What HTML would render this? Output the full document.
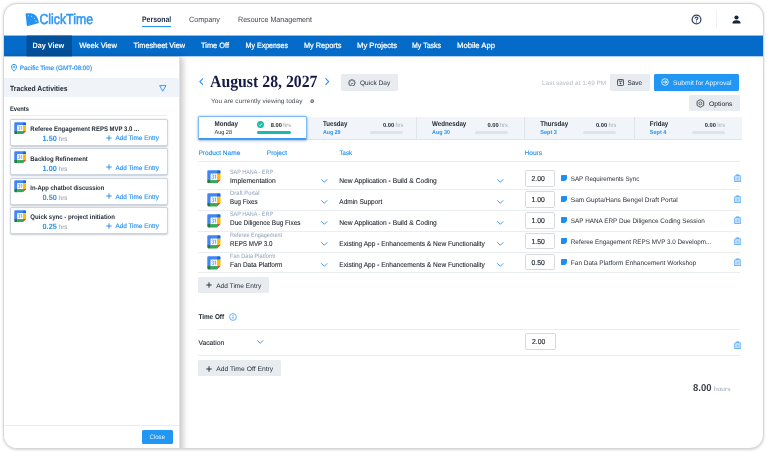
<!DOCTYPE html>
<html><head><meta charset="utf-8"><title>ClickTime</title>
<style>
html,body{margin:0;padding:0;background:#fff;}
body{width:768px;height:452px;position:relative;overflow:hidden;font-family:"Liberation Sans",sans-serif;}
#card{position:absolute;left:3px;top:3px;width:759px;height:444px;border:1px solid #d7d7d7;border-radius:14px;box-shadow:0 0.3px 2.5px rgba(0,0,0,.17);background:#fff;overflow:hidden;}
#in{position:absolute;left:-4px;top:-4px;width:768px;height:452px;}
#in div,#in svg{position:absolute;box-sizing:border-box;}
#tx{left:0;top:0;width:768px;height:452px;filter:blur(.3px);}
.t{position:absolute;left:0;top:0;white-space:nowrap;line-height:1;transform-origin:0 0;display:block;transform:scale(.25);text-rendering:geometricPrecision;}
.s{font-family:"Liberation Serif",serif;}
</style></head><body>
<div id="card"><div id="in">
<svg style="left:24.9px;top:13.1px;width:14.6px;height:13.6px" viewBox="0 0 14 13"><path d="M0.6 1.2 Q0.4 0.3 1.4 0.3 L5.5 0.3 Q11.5 0.6 13.3 8.6 Q13.5 9.6 12.5 9.8 L2.8 12.4 Q1.9 12.6 1.7 11.6 Z" fill="#2593f2"/><circle cx="3.2" cy="2.6" r="0.5" fill="#fff"/><circle cx="6.4" cy="3" r="0.5" fill="#fff"/><circle cx="9" cy="5" r="0.5" fill="#fff"/><circle cx="10.6" cy="7.8" r="0.55" fill="#fff"/></svg>
<div style="left:142px;top:26px;width:29.2px;height:1px;background:#2593f2"></div>
<svg style="left:691.1px;top:14px;width:11px;height:11px" viewBox="0 0 11 11"><circle cx="5.5" cy="5.5" r="4.4" fill="none" stroke="#30426a" stroke-width="1.25"/><path d="M4.1 4.5 Q4.1 3.1 5.5 3.1 Q6.9 3.1 6.9 4.3 Q6.9 5.1 5.5 5.8 L5.5 6.5" fill="none" stroke="#30426a" stroke-width="1.1"/><circle cx="5.5" cy="7.9" r="0.65" fill="#30426a"/></svg>
<div style="left:716.3px;top:10.5px;width:1px;height:17px;background:#eef1f6"></div>
<svg style="left:732px;top:15px;width:9px;height:9px" viewBox="0 0 9 9"><circle cx="4.5" cy="2.5" r="2.1" fill="#15233b"/><path d="M0.4 8.5 Q0.4 5.2 4.5 5.2 Q8.6 5.2 8.6 8.5 Z" fill="#15233b"/></svg>
<div style="left:0px;top:35px;width:768px;height:1px;background:rgba(4,107,201,.45)"></div>
<div style="left:0px;top:56px;width:768px;height:1px;background:rgba(4,107,201,.3)"></div>
<div style="left:0px;top:36px;width:768px;height:20px;background:#046bc9"></div>
<div style="left:27px;top:35px;width:45px;height:1px;background:rgba(3,80,154,.45)"></div>
<div style="left:27px;top:56px;width:45px;height:1px;background:rgba(3,80,154,.3)"></div>
<div style="left:26px;top:36px;width:1px;height:20px;background:rgba(3,80,154,.5)"></div>
<div style="left:27px;top:36px;width:45px;height:20px;background:#03509a"></div>
<div style="left:0px;top:57px;width:180px;height:400px;background:#fff;border-right:1px solid #dfe3e8;box-shadow:2.5px 0 6px rgba(0,0,0,.22)"></div>
<svg style="left:11.2px;top:64.2px;width:6px;height:7.6px" viewBox="0 0 6 7.6"><path d="M3 0.4 C1.5 0.4 0.5 1.5 0.5 2.9 C0.5 4.6 3 7.2 3 7.2 C3 7.2 5.5 4.6 5.5 2.9 C5.5 1.5 4.5 0.4 3 0.4 Z" fill="none" stroke="#2b93f0" stroke-width="1"/><circle cx="3" cy="2.9" r="0.95" fill="#2b93f0"/></svg>
<div style="left:4px;top:78.2px;width:175.4px;height:18.8px;background:#f0f4f9"></div>
<svg style="left:159px;top:84.6px;width:7.6px;height:7px" viewBox="0 0 7.6 7"><path d="M0.6 0.6 L7 0.6 L3.8 6.2 Z" fill="none" stroke="#2b93f0" stroke-width="0.9" stroke-linejoin="round"/></svg>
<div style="left:10px;top:114.8px;width:157px;height:1px;background:#eaeef3"></div>
<div style="left:10px;top:118.8px;width:157.6px;height:27px;background:#fff;border:1px solid #ccd5e0;border-radius:2px;box-shadow:0 0.8px 1.6px rgba(40,60,90,.26)"></div>
<svg style="left:14.1px;top:121.7px;width:12.4px;height:12.4px" viewBox="0 0 24 24"><path d="M2.5 0.5 H17.5 V6.5 H6.5 V17.5 H0.5 V2.5 Q0.5 0.5 2.5 0.5Z" fill="#4285f4"/><path d="M17.5 0.5 H21.5 Q23.5 0.5 23.5 2.5 V6.5 H17.5Z" fill="#1967d2"/><rect x="17.5" y="6.5" width="6" height="11" fill="#fbbc04"/><rect x="6.5" y="17.5" width="11" height="6" fill="#34a853"/><path d="M0.5 17.5 H6.5 V23.5 H2.5 Q0.5 23.5 0.5 21.5Z" fill="#188038"/><path d="M17.5 17.5 H23.5 L17.5 23.5Z" fill="#ea4335"/><rect x="6.5" y="6.5" width="11" height="11" fill="#fff"/><path d="M8.3 9.3 Q9 8.5 10.1 8.5 Q11.6 8.5 11.6 9.9 Q11.6 11.2 10 11.6 Q11.9 11.8 11.9 13.4 Q11.9 15.1 10.1 15.1 Q8.8 15.1 8.1 14.1 M13.3 9.7 L15 8.6 V15.2" fill="none" stroke="#4f8df5" stroke-width="1.35"/></svg>
<svg style="left:105.9px;top:134.7px;width:6px;height:6px" viewBox="0 0 6 6"><path d="M3 0.3 V5.7 M0.3 3 H5.7" stroke="#2b93f0" stroke-width="1" fill="none"/></svg>
<div style="left:10px;top:148.2px;width:157.6px;height:27px;background:#fff;border:1px solid #ccd5e0;border-radius:2px;box-shadow:0 0.8px 1.6px rgba(40,60,90,.26)"></div>
<svg style="left:14.1px;top:151.1px;width:12.4px;height:12.4px" viewBox="0 0 24 24"><path d="M2.5 0.5 H17.5 V6.5 H6.5 V17.5 H0.5 V2.5 Q0.5 0.5 2.5 0.5Z" fill="#4285f4"/><path d="M17.5 0.5 H21.5 Q23.5 0.5 23.5 2.5 V6.5 H17.5Z" fill="#1967d2"/><rect x="17.5" y="6.5" width="6" height="11" fill="#fbbc04"/><rect x="6.5" y="17.5" width="11" height="6" fill="#34a853"/><path d="M0.5 17.5 H6.5 V23.5 H2.5 Q0.5 23.5 0.5 21.5Z" fill="#188038"/><path d="M17.5 17.5 H23.5 L17.5 23.5Z" fill="#ea4335"/><rect x="6.5" y="6.5" width="11" height="11" fill="#fff"/><path d="M8.3 9.3 Q9 8.5 10.1 8.5 Q11.6 8.5 11.6 9.9 Q11.6 11.2 10 11.6 Q11.9 11.8 11.9 13.4 Q11.9 15.1 10.1 15.1 Q8.8 15.1 8.1 14.1 M13.3 9.7 L15 8.6 V15.2" fill="none" stroke="#4f8df5" stroke-width="1.35"/></svg>
<svg style="left:105.9px;top:164.1px;width:6px;height:6px" viewBox="0 0 6 6"><path d="M3 0.3 V5.7 M0.3 3 H5.7" stroke="#2b93f0" stroke-width="1" fill="none"/></svg>
<div style="left:10px;top:177.5px;width:157.6px;height:27px;background:#fff;border:1px solid #ccd5e0;border-radius:2px;box-shadow:0 0.8px 1.6px rgba(40,60,90,.26)"></div>
<svg style="left:14.1px;top:180.4px;width:12.4px;height:12.4px" viewBox="0 0 24 24"><path d="M2.5 0.5 H17.5 V6.5 H6.5 V17.5 H0.5 V2.5 Q0.5 0.5 2.5 0.5Z" fill="#4285f4"/><path d="M17.5 0.5 H21.5 Q23.5 0.5 23.5 2.5 V6.5 H17.5Z" fill="#1967d2"/><rect x="17.5" y="6.5" width="6" height="11" fill="#fbbc04"/><rect x="6.5" y="17.5" width="11" height="6" fill="#34a853"/><path d="M0.5 17.5 H6.5 V23.5 H2.5 Q0.5 23.5 0.5 21.5Z" fill="#188038"/><path d="M17.5 17.5 H23.5 L17.5 23.5Z" fill="#ea4335"/><rect x="6.5" y="6.5" width="11" height="11" fill="#fff"/><path d="M8.3 9.3 Q9 8.5 10.1 8.5 Q11.6 8.5 11.6 9.9 Q11.6 11.2 10 11.6 Q11.9 11.8 11.9 13.4 Q11.9 15.1 10.1 15.1 Q8.8 15.1 8.1 14.1 M13.3 9.7 L15 8.6 V15.2" fill="none" stroke="#4f8df5" stroke-width="1.35"/></svg>
<svg style="left:105.9px;top:193.4px;width:6px;height:6px" viewBox="0 0 6 6"><path d="M3 0.3 V5.7 M0.3 3 H5.7" stroke="#2b93f0" stroke-width="1" fill="none"/></svg>
<div style="left:10px;top:206.8px;width:157.6px;height:27px;background:#fff;border:1px solid #ccd5e0;border-radius:2px;box-shadow:0 0.8px 1.6px rgba(40,60,90,.26)"></div>
<svg style="left:14.1px;top:209.70000000000002px;width:12.4px;height:12.4px" viewBox="0 0 24 24"><path d="M2.5 0.5 H17.5 V6.5 H6.5 V17.5 H0.5 V2.5 Q0.5 0.5 2.5 0.5Z" fill="#4285f4"/><path d="M17.5 0.5 H21.5 Q23.5 0.5 23.5 2.5 V6.5 H17.5Z" fill="#1967d2"/><rect x="17.5" y="6.5" width="6" height="11" fill="#fbbc04"/><rect x="6.5" y="17.5" width="11" height="6" fill="#34a853"/><path d="M0.5 17.5 H6.5 V23.5 H2.5 Q0.5 23.5 0.5 21.5Z" fill="#188038"/><path d="M17.5 17.5 H23.5 L17.5 23.5Z" fill="#ea4335"/><rect x="6.5" y="6.5" width="11" height="11" fill="#fff"/><path d="M8.3 9.3 Q9 8.5 10.1 8.5 Q11.6 8.5 11.6 9.9 Q11.6 11.2 10 11.6 Q11.9 11.8 11.9 13.4 Q11.9 15.1 10.1 15.1 Q8.8 15.1 8.1 14.1 M13.3 9.7 L15 8.6 V15.2" fill="none" stroke="#4f8df5" stroke-width="1.35"/></svg>
<svg style="left:105.9px;top:222.70000000000002px;width:6px;height:6px" viewBox="0 0 6 6"><path d="M3 0.3 V5.7 M0.3 3 H5.7" stroke="#2b93f0" stroke-width="1" fill="none"/></svg>
<div style="left:4px;top:425.2px;width:175.4px;height:1px;background:#eaeef3"></div>
<div style="left:142px;top:429.8px;width:30.8px;height:14.4px;background:#2196f3;border-radius:1.5px"></div>
<svg style="left:198.6px;top:78.2px;width:4.6px;height:7.4px" viewBox="0 0 4.6 7.4"><path d="M3.8 0.7 L0.9 3.7 L3.8 6.7" fill="none" stroke="#2b93f0" stroke-width="1.1" stroke-linecap="round" stroke-linejoin="round"/></svg>
<svg style="left:325px;top:78.2px;width:4.6px;height:7.4px" viewBox="0 0 4.6 7.4"><path d="M0.8 0.7 L3.7 3.7 L0.8 6.7" fill="none" stroke="#2b93f0" stroke-width="1.1" stroke-linecap="round" stroke-linejoin="round"/></svg>
<div style="left:340.8px;top:74.2px;width:57.2px;height:16.4px;background:#e8ebef;border-radius:1.5px"></div>
<svg style="left:347.8px;top:78.6px;width:7.8px;height:7.8px" viewBox="0 0 8 8"><circle cx="4" cy="4" r="3.3" fill="none" stroke="#39404a" stroke-width="0.8"/><path d="M4 1.1 V2 M1.1 4 H2 M6 4 H6.9 M2 2 L2.6 2.6 M6 2 L5.4 2.6 M4.2 4 L3 6 M4.2 4 L5.3 5.2" stroke="#39404a" stroke-width="0.65" fill="none"/></svg>
<svg style="left:309.8px;top:99px;width:4.4px;height:4.4px" viewBox="0 0 4 4"><circle cx="2" cy="2" r="1.7" fill="#6c727b"/><circle cx="2" cy="2" r="0.6" fill="#fff"/></svg>
<div style="left:610px;top:74px;width:40px;height:16.5px;background:#e8ebef;border-radius:1.5px"></div>
<svg style="left:617px;top:79px;width:7px;height:7px" viewBox="0 0 7 7"><rect x="0.5" y="0.5" width="6" height="6" rx="0.8" fill="none" stroke="#2d333c" stroke-width="0.8"/><path d="M2 0.8 V2.4 H5 V0.8" fill="none" stroke="#2d333c" stroke-width="0.7"/><circle cx="3.5" cy="4.4" r="0.8" fill="#2d333c"/></svg>
<div style="left:654px;top:74px;width:85.4px;height:16.5px;background:#2196f3;border-radius:1.5px"></div>
<svg style="left:661px;top:78.4px;width:8px;height:8px" viewBox="0 0 8 8"><circle cx="4" cy="4" r="3.3" fill="none" stroke="#fff" stroke-width="0.8"/><path d="M2.1 4 H5.7 M4.2 2.5 L5.8 4 L4.2 5.5" fill="none" stroke="#fff" stroke-width="0.95"/></svg>
<div style="left:689.4px;top:95px;width:50.4px;height:16.4px;background:#e8ebef;border-radius:1.5px"></div>
<svg style="left:696px;top:99.2px;width:8.8px;height:8.8px" viewBox="0 0 8 8"><path d="M4 0.5 L7 2.2 V5.8 L4 7.5 L1 5.8 V2.2 Z" fill="none" stroke="#39404a" stroke-width="0.8" stroke-linejoin="round"/><circle cx="4" cy="4" r="1.3" fill="none" stroke="#39404a" stroke-width="0.7"/></svg>
<div style="left:198.4px;top:117px;width:543.4px;height:22.6px;background:#f1f5f9;border-bottom:1px solid #dde4ec"></div>
<div style="left:415.7px;top:117px;width:1px;height:22px;background:#dde4ec"></div>
<div style="left:524.4px;top:117px;width:1px;height:22px;background:#dde4ec"></div>
<div style="left:633.6px;top:117px;width:1px;height:22px;background:#dde4ec"></div>
<div style="left:198px;top:116px;width:109px;height:24px;background:#fff;border:1px solid #7ebcf5;border-bottom:2px solid #3d9cf1;border-radius:2px;box-shadow:0 0 2px rgba(43,147,240,.55),0 1px 3px rgba(30,60,110,.25)"></div>
<svg style="left:257.1px;top:121.2px;width:7px;height:7px" viewBox="0 0 8 8"><circle cx="4" cy="4" r="4" fill="#1bbcab"/><path d="M2.2 4.1 L3.5 5.4 L5.8 2.9" fill="none" stroke="#fff" stroke-width="0.9"/></svg>
<div style="left:257px;top:131.2px;width:34px;height:3px;background:#18bca8;border-radius:1.5px"></div>
<div style="left:369.5px;top:131.2px;width:33.69999999999999px;height:3px;background:#dde3ea;border-radius:1.5px"></div>
<div style="left:475px;top:131.2px;width:32.69999999999999px;height:3px;background:#dde3ea;border-radius:1.5px"></div>
<div style="left:583px;top:131.2px;width:33.10000000000002px;height:3px;background:#dde3ea;border-radius:1.5px"></div>
<div style="left:692px;top:131.2px;width:32.90000000000009px;height:3px;background:#dde3ea;border-radius:1.5px"></div>
<div style="left:198.4px;top:161.2px;width:541.4px;height:1px;background:#eaeef3"></div>
<svg style="left:207.3px;top:169.6px;width:13.8px;height:13.8px" viewBox="0 0 24 24"><path d="M2.5 0.5 H17.5 V6.5 H6.5 V17.5 H0.5 V2.5 Q0.5 0.5 2.5 0.5Z" fill="#4285f4"/><path d="M17.5 0.5 H21.5 Q23.5 0.5 23.5 2.5 V6.5 H17.5Z" fill="#1967d2"/><rect x="17.5" y="6.5" width="6" height="11" fill="#fbbc04"/><rect x="6.5" y="17.5" width="11" height="6" fill="#34a853"/><path d="M0.5 17.5 H6.5 V23.5 H2.5 Q0.5 23.5 0.5 21.5Z" fill="#188038"/><path d="M17.5 17.5 H23.5 L17.5 23.5Z" fill="#ea4335"/><rect x="6.5" y="6.5" width="11" height="11" fill="#fff"/><path d="M8.3 9.3 Q9 8.5 10.1 8.5 Q11.6 8.5 11.6 9.9 Q11.6 11.2 10 11.6 Q11.9 11.8 11.9 13.4 Q11.9 15.1 10.1 15.1 Q8.8 15.1 8.1 14.1 M13.3 9.7 L15 8.6 V15.2" fill="none" stroke="#4f8df5" stroke-width="1.35"/></svg>
<svg style="left:321.1px;top:178.8px;width:6.6px;height:4px" viewBox="0 0 6.6 4"><path d="M0.6 0.6 L3.3 3.3 L6 0.6" fill="none" stroke="#3798f1" stroke-width="0.95" stroke-linecap="round" stroke-linejoin="round"/></svg>
<svg style="left:497.2px;top:178.8px;width:6.6px;height:4px" viewBox="0 0 6.6 4"><path d="M0.6 0.6 L3.3 3.3 L6 0.6" fill="none" stroke="#3798f1" stroke-width="0.95" stroke-linecap="round" stroke-linejoin="round"/></svg>
<div style="left:524.6px;top:170.20000000000002px;width:30.2px;height:16.4px;background:#fff;border:1px solid #d6dade;border-radius:1.8px"></div>
<svg style="left:561px;top:174.9px;width:6.4px;height:6.2px" viewBox="0 0 6.4 6.2"><path d="M1 0 H5.4 Q6.4 0 6.4 1 V3.6 L3.8 6.2 H1 Q0 6.2 0 5.2 V1 Q0 0 1 0Z" fill="#1e8ef5"/></svg>
<svg style="left:733.6px;top:173.8px;width:7.4px;height:8.6px" viewBox="0 0 7.4 8.6"><rect x="2.3" y="0.4" width="2.8" height="1.8" rx="0.7" fill="#9fcdf9" stroke="#55a9f4" stroke-width="0.5"/><rect x="0.55" y="1.6" width="6.3" height="6.5" rx="1.1" fill="#c3e0fc" stroke="#4aa3f5" stroke-width="0.7"/><path d="M1 7.9 H6.4" stroke="#2b93f0" stroke-width="0.7"/><path d="M3.7 3.6 V6.3 M2.5 4.9 H4.9" stroke="#7bbcf7" stroke-width="0.7"/></svg>
<svg style="left:207.3px;top:193.2px;width:13.8px;height:13.8px" viewBox="0 0 24 24"><path d="M2.5 0.5 H17.5 V6.5 H6.5 V17.5 H0.5 V2.5 Q0.5 0.5 2.5 0.5Z" fill="#4285f4"/><path d="M17.5 0.5 H21.5 Q23.5 0.5 23.5 2.5 V6.5 H17.5Z" fill="#1967d2"/><rect x="17.5" y="6.5" width="6" height="11" fill="#fbbc04"/><rect x="6.5" y="17.5" width="11" height="6" fill="#34a853"/><path d="M0.5 17.5 H6.5 V23.5 H2.5 Q0.5 23.5 0.5 21.5Z" fill="#188038"/><path d="M17.5 17.5 H23.5 L17.5 23.5Z" fill="#ea4335"/><rect x="6.5" y="6.5" width="11" height="11" fill="#fff"/><path d="M8.3 9.3 Q9 8.5 10.1 8.5 Q11.6 8.5 11.6 9.9 Q11.6 11.2 10 11.6 Q11.9 11.8 11.9 13.4 Q11.9 15.1 10.1 15.1 Q8.8 15.1 8.1 14.1 M13.3 9.7 L15 8.6 V15.2" fill="none" stroke="#4f8df5" stroke-width="1.35"/></svg>
<svg style="left:321.1px;top:199.8px;width:6.6px;height:4px" viewBox="0 0 6.6 4"><path d="M0.6 0.6 L3.3 3.3 L6 0.6" fill="none" stroke="#3798f1" stroke-width="0.95" stroke-linecap="round" stroke-linejoin="round"/></svg>
<svg style="left:497.2px;top:199.8px;width:6.6px;height:4px" viewBox="0 0 6.6 4"><path d="M0.6 0.6 L3.3 3.3 L6 0.6" fill="none" stroke="#3798f1" stroke-width="0.95" stroke-linecap="round" stroke-linejoin="round"/></svg>
<div style="left:524.6px;top:191.3px;width:30.2px;height:16.4px;background:#fff;border:1px solid #d6dade;border-radius:1.8px"></div>
<svg style="left:561px;top:196.0px;width:6.4px;height:6.2px" viewBox="0 0 6.4 6.2"><path d="M1 0 H5.4 Q6.4 0 6.4 1 V3.6 L3.8 6.2 H1 Q0 6.2 0 5.2 V1 Q0 0 1 0Z" fill="#1e8ef5"/></svg>
<svg style="left:733.6px;top:194.9px;width:7.4px;height:8.6px" viewBox="0 0 7.4 8.6"><rect x="2.3" y="0.4" width="2.8" height="1.8" rx="0.7" fill="#9fcdf9" stroke="#55a9f4" stroke-width="0.5"/><rect x="0.55" y="1.6" width="6.3" height="6.5" rx="1.1" fill="#c3e0fc" stroke="#4aa3f5" stroke-width="0.7"/><path d="M1 7.9 H6.4" stroke="#2b93f0" stroke-width="0.7"/><path d="M3.7 3.6 V6.3 M2.5 4.9 H4.9" stroke="#7bbcf7" stroke-width="0.7"/></svg>
<svg style="left:207.3px;top:214.1px;width:13.8px;height:13.8px" viewBox="0 0 24 24"><path d="M2.5 0.5 H17.5 V6.5 H6.5 V17.5 H0.5 V2.5 Q0.5 0.5 2.5 0.5Z" fill="#4285f4"/><path d="M17.5 0.5 H21.5 Q23.5 0.5 23.5 2.5 V6.5 H17.5Z" fill="#1967d2"/><rect x="17.5" y="6.5" width="6" height="11" fill="#fbbc04"/><rect x="6.5" y="17.5" width="11" height="6" fill="#34a853"/><path d="M0.5 17.5 H6.5 V23.5 H2.5 Q0.5 23.5 0.5 21.5Z" fill="#188038"/><path d="M17.5 17.5 H23.5 L17.5 23.5Z" fill="#ea4335"/><rect x="6.5" y="6.5" width="11" height="11" fill="#fff"/><path d="M8.3 9.3 Q9 8.5 10.1 8.5 Q11.6 8.5 11.6 9.9 Q11.6 11.2 10 11.6 Q11.9 11.8 11.9 13.4 Q11.9 15.1 10.1 15.1 Q8.8 15.1 8.1 14.1 M13.3 9.7 L15 8.6 V15.2" fill="none" stroke="#4f8df5" stroke-width="1.35"/></svg>
<svg style="left:321.1px;top:220.8px;width:6.6px;height:4px" viewBox="0 0 6.6 4"><path d="M0.6 0.6 L3.3 3.3 L6 0.6" fill="none" stroke="#3798f1" stroke-width="0.95" stroke-linecap="round" stroke-linejoin="round"/></svg>
<svg style="left:497.2px;top:220.8px;width:6.6px;height:4px" viewBox="0 0 6.6 4"><path d="M0.6 0.6 L3.3 3.3 L6 0.6" fill="none" stroke="#3798f1" stroke-width="0.95" stroke-linecap="round" stroke-linejoin="round"/></svg>
<div style="left:524.6px;top:212.20000000000002px;width:30.2px;height:16.4px;background:#fff;border:1px solid #d6dade;border-radius:1.8px"></div>
<svg style="left:561px;top:216.9px;width:6.4px;height:6.2px" viewBox="0 0 6.4 6.2"><path d="M1 0 H5.4 Q6.4 0 6.4 1 V3.6 L3.8 6.2 H1 Q0 6.2 0 5.2 V1 Q0 0 1 0Z" fill="#1e8ef5"/></svg>
<svg style="left:733.6px;top:215.8px;width:7.4px;height:8.6px" viewBox="0 0 7.4 8.6"><rect x="2.3" y="0.4" width="2.8" height="1.8" rx="0.7" fill="#9fcdf9" stroke="#55a9f4" stroke-width="0.5"/><rect x="0.55" y="1.6" width="6.3" height="6.5" rx="1.1" fill="#c3e0fc" stroke="#4aa3f5" stroke-width="0.7"/><path d="M1 7.9 H6.4" stroke="#2b93f0" stroke-width="0.7"/><path d="M3.7 3.6 V6.3 M2.5 4.9 H4.9" stroke="#7bbcf7" stroke-width="0.7"/></svg>
<svg style="left:207.3px;top:235.0px;width:13.8px;height:13.8px" viewBox="0 0 24 24"><path d="M2.5 0.5 H17.5 V6.5 H6.5 V17.5 H0.5 V2.5 Q0.5 0.5 2.5 0.5Z" fill="#4285f4"/><path d="M17.5 0.5 H21.5 Q23.5 0.5 23.5 2.5 V6.5 H17.5Z" fill="#1967d2"/><rect x="17.5" y="6.5" width="6" height="11" fill="#fbbc04"/><rect x="6.5" y="17.5" width="11" height="6" fill="#34a853"/><path d="M0.5 17.5 H6.5 V23.5 H2.5 Q0.5 23.5 0.5 21.5Z" fill="#188038"/><path d="M17.5 17.5 H23.5 L17.5 23.5Z" fill="#ea4335"/><rect x="6.5" y="6.5" width="11" height="11" fill="#fff"/><path d="M8.3 9.3 Q9 8.5 10.1 8.5 Q11.6 8.5 11.6 9.9 Q11.6 11.2 10 11.6 Q11.9 11.8 11.9 13.4 Q11.9 15.1 10.1 15.1 Q8.8 15.1 8.1 14.1 M13.3 9.7 L15 8.6 V15.2" fill="none" stroke="#4f8df5" stroke-width="1.35"/></svg>
<svg style="left:321.1px;top:241.8px;width:6.6px;height:4px" viewBox="0 0 6.6 4"><path d="M0.6 0.6 L3.3 3.3 L6 0.6" fill="none" stroke="#3798f1" stroke-width="0.95" stroke-linecap="round" stroke-linejoin="round"/></svg>
<svg style="left:497.2px;top:241.8px;width:6.6px;height:4px" viewBox="0 0 6.6 4"><path d="M0.6 0.6 L3.3 3.3 L6 0.6" fill="none" stroke="#3798f1" stroke-width="0.95" stroke-linecap="round" stroke-linejoin="round"/></svg>
<div style="left:524.6px;top:233.10000000000002px;width:30.2px;height:16.4px;background:#fff;border:1px solid #d6dade;border-radius:1.8px"></div>
<svg style="left:561px;top:237.8px;width:6.4px;height:6.2px" viewBox="0 0 6.4 6.2"><path d="M1 0 H5.4 Q6.4 0 6.4 1 V3.6 L3.8 6.2 H1 Q0 6.2 0 5.2 V1 Q0 0 1 0Z" fill="#1e8ef5"/></svg>
<svg style="left:733.6px;top:236.70000000000002px;width:7.4px;height:8.6px" viewBox="0 0 7.4 8.6"><rect x="2.3" y="0.4" width="2.8" height="1.8" rx="0.7" fill="#9fcdf9" stroke="#55a9f4" stroke-width="0.5"/><rect x="0.55" y="1.6" width="6.3" height="6.5" rx="1.1" fill="#c3e0fc" stroke="#4aa3f5" stroke-width="0.7"/><path d="M1 7.9 H6.4" stroke="#2b93f0" stroke-width="0.7"/><path d="M3.7 3.6 V6.3 M2.5 4.9 H4.9" stroke="#7bbcf7" stroke-width="0.7"/></svg>
<svg style="left:207.3px;top:255.9px;width:13.8px;height:13.8px" viewBox="0 0 24 24"><path d="M2.5 0.5 H17.5 V6.5 H6.5 V17.5 H0.5 V2.5 Q0.5 0.5 2.5 0.5Z" fill="#4285f4"/><path d="M17.5 0.5 H21.5 Q23.5 0.5 23.5 2.5 V6.5 H17.5Z" fill="#1967d2"/><rect x="17.5" y="6.5" width="6" height="11" fill="#fbbc04"/><rect x="6.5" y="17.5" width="11" height="6" fill="#34a853"/><path d="M0.5 17.5 H6.5 V23.5 H2.5 Q0.5 23.5 0.5 21.5Z" fill="#188038"/><path d="M17.5 17.5 H23.5 L17.5 23.5Z" fill="#ea4335"/><rect x="6.5" y="6.5" width="11" height="11" fill="#fff"/><path d="M8.3 9.3 Q9 8.5 10.1 8.5 Q11.6 8.5 11.6 9.9 Q11.6 11.2 10 11.6 Q11.9 11.8 11.9 13.4 Q11.9 15.1 10.1 15.1 Q8.8 15.1 8.1 14.1 M13.3 9.7 L15 8.6 V15.2" fill="none" stroke="#4f8df5" stroke-width="1.35"/></svg>
<svg style="left:321.1px;top:262.8px;width:6.6px;height:4px" viewBox="0 0 6.6 4"><path d="M0.6 0.6 L3.3 3.3 L6 0.6" fill="none" stroke="#3798f1" stroke-width="0.95" stroke-linecap="round" stroke-linejoin="round"/></svg>
<svg style="left:497.2px;top:262.8px;width:6.6px;height:4px" viewBox="0 0 6.6 4"><path d="M0.6 0.6 L3.3 3.3 L6 0.6" fill="none" stroke="#3798f1" stroke-width="0.95" stroke-linecap="round" stroke-linejoin="round"/></svg>
<div style="left:524.6px;top:254.0px;width:30.2px;height:16.4px;background:#fff;border:1px solid #d6dade;border-radius:1.8px"></div>
<svg style="left:561px;top:258.7px;width:6.4px;height:6.2px" viewBox="0 0 6.4 6.2"><path d="M1 0 H5.4 Q6.4 0 6.4 1 V3.6 L3.8 6.2 H1 Q0 6.2 0 5.2 V1 Q0 0 1 0Z" fill="#1e8ef5"/></svg>
<svg style="left:733.6px;top:257.59999999999997px;width:7.4px;height:8.6px" viewBox="0 0 7.4 8.6"><rect x="2.3" y="0.4" width="2.8" height="1.8" rx="0.7" fill="#9fcdf9" stroke="#55a9f4" stroke-width="0.5"/><rect x="0.55" y="1.6" width="6.3" height="6.5" rx="1.1" fill="#c3e0fc" stroke="#4aa3f5" stroke-width="0.7"/><path d="M1 7.9 H6.4" stroke="#2b93f0" stroke-width="0.7"/><path d="M3.7 3.6 V6.3 M2.5 4.9 H4.9" stroke="#7bbcf7" stroke-width="0.7"/></svg>
<div style="left:198.4px;top:189.2px;width:541.4px;height:1px;background:#eaeef3"></div>
<div style="left:198.4px;top:209.8px;width:541.4px;height:1px;background:#eaeef3"></div>
<div style="left:198.4px;top:230.6px;width:541.4px;height:1px;background:#eaeef3"></div>
<div style="left:198.4px;top:251.6px;width:541.4px;height:1px;background:#eaeef3"></div>
<div style="left:198.4px;top:272.4px;width:541.4px;height:1px;background:#eaeef3"></div>
<div style="left:198.4px;top:276.8px;width:70.6px;height:16.5px;background:#e8ebef;border-radius:1.5px"></div>
<svg style="left:206.2px;top:282.4px;width:6px;height:6px" viewBox="0 0 6 6"><path d="M3 0.3 V5.7 M0.3 3 H5.7" stroke="#2d333c" stroke-width="1" fill="none"/></svg>
<svg style="left:229.2px;top:313px;width:8px;height:8px" viewBox="0 0 8 8"><circle cx="4" cy="4" r="3.4" fill="none" stroke="#2b93f0" stroke-width="0.7"/><path d="M4 3.5 V5.9" stroke="#2b93f0" stroke-width="0.8"/><circle cx="4" cy="2.3" r="0.5" fill="#2b93f0"/></svg>
<div style="left:198.4px;top:329px;width:541.4px;height:1px;background:#eaeef3"></div>
<svg style="left:257px;top:340.2px;width:6.6px;height:4px" viewBox="0 0 6.6 4"><path d="M0.6 0.6 L3.3 3.3 L6 0.6" fill="none" stroke="#3798f1" stroke-width="0.95" stroke-linecap="round" stroke-linejoin="round"/></svg>
<div style="left:525px;top:333px;width:31px;height:17px;background:#fff;border:1px solid #d6dade;border-radius:2px"></div>
<svg style="left:733.6px;top:340.6px;width:7.4px;height:8.6px" viewBox="0 0 7.4 8.6"><rect x="2.3" y="0.4" width="2.8" height="1.8" rx="0.7" fill="#9fcdf9" stroke="#55a9f4" stroke-width="0.5"/><rect x="0.55" y="1.6" width="6.3" height="6.5" rx="1.1" fill="#c3e0fc" stroke="#4aa3f5" stroke-width="0.7"/><path d="M1 7.9 H6.4" stroke="#2b93f0" stroke-width="0.7"/><path d="M3.7 3.6 V6.3 M2.5 4.9 H4.9" stroke="#7bbcf7" stroke-width="0.7"/></svg>
<div style="left:198.4px;top:354.8px;width:541.4px;height:1px;background:#eaeef3"></div>
<div style="left:198.4px;top:360px;width:82.3px;height:16.2px;background:#e8ebef;border-radius:1.5px"></div>
<svg style="left:206.2px;top:365.6px;width:6px;height:6px" viewBox="0 0 6 6"><path d="M3 0.3 V5.7 M0.3 3 H5.7" stroke="#2d333c" stroke-width="1" fill="none"/></svg>
<div id="tx">
<span class="t" style="font-size:57.6px;color:#2e97f3;-webkit-text-stroke:2.2px #2e97f3;transform:translate(39.40px,12.27px) scale(0.2139,.25);">ClickTime</span>
<span class="t" style="font-size:32.0px;color:#1c2a44;font-weight:700;transform:translate(142.00px,15.27px) scale(0.2160,.25);">Personal</span>
<span class="t" style="font-size:30.4px;color:#3f444c;transform:translate(189.00px,15.77px) scale(0.2368,.25);">Company</span>
<span class="t" style="font-size:30.4px;color:#3f444c;transform:translate(238.00px,15.77px) scale(0.2342,.25);">Resource Management</span>
<span class="t" style="font-size:31.2px;color:#ffffff;font-weight:700;transform:translate(32.40px,41.52px) scale(0.2332,.25);">Day View</span>
<span class="t" style="font-size:31.2px;color:#ffffff;-webkit-text-stroke:0.9px #ffffff;transform:translate(79.30px,41.52px) scale(0.2434,.25);">Week View</span>
<span class="t" style="font-size:31.2px;color:#ffffff;-webkit-text-stroke:0.9px #ffffff;transform:translate(133.50px,41.52px) scale(0.2339,.25);">Timesheet View</span>
<span class="t" style="font-size:31.2px;color:#ffffff;-webkit-text-stroke:0.9px #ffffff;transform:translate(201.00px,41.52px) scale(0.2376,.25);">Time Off</span>
<span class="t" style="font-size:31.2px;color:#ffffff;-webkit-text-stroke:0.9px #ffffff;transform:translate(245.50px,41.52px) scale(0.2270,.25);">My Expenses</span>
<span class="t" style="font-size:31.2px;color:#ffffff;-webkit-text-stroke:0.9px #ffffff;transform:translate(304.00px,41.52px) scale(0.2352,.25);">My Reports</span>
<span class="t" style="font-size:31.2px;color:#ffffff;-webkit-text-stroke:0.9px #ffffff;transform:translate(357.00px,41.52px) scale(0.2455,.25);">My Projects</span>
<span class="t" style="font-size:31.2px;color:#ffffff;-webkit-text-stroke:0.9px #ffffff;transform:translate(412.00px,41.52px) scale(0.2241,.25);">My Tasks</span>
<span class="t" style="font-size:31.2px;color:#ffffff;-webkit-text-stroke:0.9px #ffffff;transform:translate(457.00px,41.52px) scale(0.2463,.25);">Mobile App</span>
<span class="t" style="font-size:25.2px;color:#2b93f0;-webkit-text-stroke:0.7px #2b93f0;transform:translate(19.80px,65.02px) scale(0.2529,.25);">Pacific Time (GMT-08:00)</span>
<span class="t" style="font-size:30.0px;color:#1c2430;font-weight:700;transform:translate(10.00px,85.02px) scale(0.2264,.25);">Tracked Activities</span>
<span class="t" style="font-size:26.0px;color:#1c2430;font-weight:700;transform:translate(10.00px,105.52px) scale(0.2228,.25);">Events</span>
<span class="t" style="font-size:26.8px;color:#1c2430;font-weight:700;transform:translate(30.30px,125.52px) scale(0.2236,.25);">Referee Engagement REPS MVP 3.0 ...</span>
<span class="t" style="font-size:30.4px;color:#2b93f0;font-weight:700;transform:translate(42.50px,134.77px) scale(0.2417,.25);">1.50</span>
<span class="t" style="font-size:25.6px;color:#8f98a3;transform:translate(58.70px,136.02px) scale(0.2475,.25);">hrs</span>
<span class="t" style="font-size:26.0px;color:#2b93f0;-webkit-text-stroke:0.6px #2b93f0;transform:translate(115.50px,134.52px) scale(0.2447,.25);">Add Time Entry</span>
<span class="t" style="font-size:26.8px;color:#1c2430;font-weight:700;transform:translate(30.30px,155.52px) scale(0.2232,.25);">Backlog Refinement</span>
<span class="t" style="font-size:30.4px;color:#2b93f0;font-weight:700;transform:translate(42.50px,164.77px) scale(0.2417,.25);">1.00</span>
<span class="t" style="font-size:25.6px;color:#8f98a3;transform:translate(58.70px,166.02px) scale(0.2475,.25);">hrs</span>
<span class="t" style="font-size:26.0px;color:#2b93f0;-webkit-text-stroke:0.6px #2b93f0;transform:translate(115.50px,164.52px) scale(0.2447,.25);">Add Time Entry</span>
<span class="t" style="font-size:26.8px;color:#1c2430;font-weight:700;transform:translate(30.30px,184.52px) scale(0.2199,.25);">In-App chatbot discussion</span>
<span class="t" style="font-size:30.4px;color:#2b93f0;font-weight:700;transform:translate(42.50px,193.77px) scale(0.2417,.25);">0.50</span>
<span class="t" style="font-size:25.6px;color:#8f98a3;transform:translate(58.70px,195.02px) scale(0.2475,.25);">hrs</span>
<span class="t" style="font-size:26.0px;color:#2b93f0;-webkit-text-stroke:0.6px #2b93f0;transform:translate(115.50px,193.52px) scale(0.2447,.25);">Add Time Entry</span>
<span class="t" style="font-size:26.8px;color:#1c2430;font-weight:700;transform:translate(30.30px,213.52px) scale(0.2257,.25);">Quick sync - project initiation</span>
<span class="t" style="font-size:30.4px;color:#2b93f0;font-weight:700;transform:translate(42.50px,222.77px) scale(0.2417,.25);">0.25</span>
<span class="t" style="font-size:25.6px;color:#8f98a3;transform:translate(58.70px,224.02px) scale(0.2475,.25);">hrs</span>
<span class="t" style="font-size:26.0px;color:#2b93f0;-webkit-text-stroke:0.6px #2b93f0;transform:translate(115.50px,222.52px) scale(0.2447,.25);">Add Time Entry</span>
<span class="t" style="font-size:25.6px;color:#e8f3ff;transform:translate(149.50px,434.02px) scale(0.2369,.25);">Close</span>
<span class="t s" style="font-size:68.8px;color:#161b45;font-weight:700;transform:translate(210.00px,72.77px) scale(0.2296,.25);">August 28, 2027</span>
<span class="t" style="font-size:26.4px;color:#2d333c;transform:translate(360.00px,79.52px) scale(0.2481,.25);">Quick Day</span>
<span class="t" style="font-size:25.2px;color:#4a4f57;transform:translate(211.00px,98.02px) scale(0.2621,.25);">You are currently viewing today</span>
<span class="t" style="font-size:25.2px;color:#b4bac2;transform:translate(542.00px,80.02px) scale(0.2562,.25);">Last saved at 1:49 PM</span>
<span class="t" style="font-size:27.2px;color:#20252d;transform:translate(627.50px,79.27px) scale(0.2340,.25);">Save</span>
<span class="t" style="font-size:26.4px;color:#eaf4ff;transform:translate(673.00px,79.52px) scale(0.2544,.25);">Submit for Approval</span>
<span class="t" style="font-size:26.4px;color:#20252d;transform:translate(709.00px,100.52px) scale(0.2584,.25);">Options</span>
<span class="t" style="font-size:28.0px;color:#1c2430;font-weight:700;transform:translate(214.50px,120.27px) scale(0.2222,.25);">Monday</span>
<span class="t" style="font-size:23.2px;color:#1c2430;transform:translate(214.50px,129.27px) scale(0.2381,.25);">Aug 28</span>
<span class="t" style="font-size:23.2px;color:#1c2430;font-weight:700;transform:translate(270.80px,122.27px) scale(0.2481,.25);">8.00</span>
<span class="t" style="font-size:24.8px;color:#8f99a6;transform:translate(283.20px,122.27px) scale(0.2264,.25);">hrs</span>
<span class="t" style="font-size:28.0px;color:#1c2430;font-weight:700;transform:translate(323.00px,120.27px) scale(0.2179,.25);">Tuesday</span>
<span class="t" style="font-size:23.2px;color:#2b93f0;font-weight:700;transform:translate(323.00px,129.27px) scale(0.2264,.25);">Aug 29</span>
<span class="t" style="font-size:23.2px;color:#1c2430;font-weight:700;transform:translate(383.00px,122.27px) scale(0.2481,.25);">0.00</span>
<span class="t" style="font-size:24.8px;color:#a3acb7;transform:translate(395.50px,122.27px) scale(0.2264,.25);">hrs</span>
<span class="t" style="font-size:28.0px;color:#1c2430;font-weight:700;transform:translate(432.00px,120.27px) scale(0.2212,.25);">Wednesday</span>
<span class="t" style="font-size:23.2px;color:#2b93f0;font-weight:700;transform:translate(432.00px,129.27px) scale(0.2328,.25);">Aug 30</span>
<span class="t" style="font-size:23.2px;color:#1c2430;font-weight:700;transform:translate(487.50px,122.27px) scale(0.2481,.25);">0.00</span>
<span class="t" style="font-size:24.8px;color:#a3acb7;transform:translate(500.00px,122.27px) scale(0.2264,.25);">hrs</span>
<span class="t" style="font-size:28.0px;color:#1c2430;font-weight:700;transform:translate(540.30px,120.27px) scale(0.2206,.25);">Thursday</span>
<span class="t" style="font-size:23.2px;color:#2b93f0;font-weight:700;transform:translate(540.30px,129.27px) scale(0.2371,.25);">Sept 3</span>
<span class="t" style="font-size:23.2px;color:#1c2430;font-weight:700;transform:translate(595.90px,122.27px) scale(0.2481,.25);">0.00</span>
<span class="t" style="font-size:24.8px;color:#a3acb7;transform:translate(608.40px,122.27px) scale(0.2264,.25);">hrs</span>
<span class="t" style="font-size:28.0px;color:#1c2430;font-weight:700;transform:translate(649.80px,120.27px) scale(0.2190,.25);">Friday</span>
<span class="t" style="font-size:23.2px;color:#2b93f0;font-weight:700;transform:translate(649.80px,129.27px) scale(0.2371,.25);">Sept 4</span>
<span class="t" style="font-size:23.2px;color:#1c2430;font-weight:700;transform:translate(704.70px,122.27px) scale(0.2481,.25);">0.00</span>
<span class="t" style="font-size:24.8px;color:#a3acb7;transform:translate(717.20px,122.27px) scale(0.2264,.25);">hrs</span>
<span class="t" style="font-size:26.4px;color:#2b93f0;-webkit-text-stroke:0.6px #2b93f0;transform:translate(198.40px,149.52px) scale(0.2490,.25);">Product Name</span>
<span class="t" style="font-size:26.4px;color:#2b93f0;-webkit-text-stroke:0.6px #2b93f0;transform:translate(266.80px,149.52px) scale(0.2459,.25);">Project</span>
<span class="t" style="font-size:26.4px;color:#2b93f0;-webkit-text-stroke:0.6px #2b93f0;transform:translate(339.50px,149.52px) scale(0.2303,.25);">Task</span>
<span class="t" style="font-size:26.4px;color:#2b93f0;-webkit-text-stroke:0.6px #2b93f0;transform:translate(524.50px,149.52px) scale(0.2486,.25);">Hours</span>
<span class="t" style="font-size:25.2px;color:#8ea2b8;transform:translate(230.00px,169.02px) scale(0.2153,.25);">SAP HANA - ERP</span>
<span class="t" style="font-size:28.0px;color:#20252d;-webkit-text-stroke:0.35px #20252d;transform:translate(230.00px,177.27px) scale(0.2392,.25);">Implementation</span>
<span class="t" style="font-size:28.0px;color:#20252d;-webkit-text-stroke:0.35px #20252d;transform:translate(339.30px,177.27px) scale(0.2382,.25);">New Application - Build &amp; Coding</span>
<span class="t" style="font-size:28.8px;color:#20252d;-webkit-text-stroke:0.6px #20252d;transform:translate(531.60px,175.27px) scale(0.2355,.25);">2.00</span>
<span class="t" style="font-size:26.4px;color:#2a2f37;transform:translate(570.80px,175.52px) scale(0.2362,.25);">SAP Requirements Sync</span>
<span class="t" style="font-size:25.2px;color:#8ea2b8;transform:translate(230.00px,190.02px) scale(0.2316,.25);">Draft Portal</span>
<span class="t" style="font-size:28.0px;color:#20252d;-webkit-text-stroke:0.35px #20252d;transform:translate(230.00px,198.27px) scale(0.2209,.25);">Bug Fixes</span>
<span class="t" style="font-size:28.0px;color:#20252d;-webkit-text-stroke:0.35px #20252d;transform:translate(339.30px,198.27px) scale(0.2322,.25);">Admin Support</span>
<span class="t" style="font-size:28.8px;color:#20252d;-webkit-text-stroke:0.6px #20252d;transform:translate(531.60px,196.27px) scale(0.2355,.25);">1.00</span>
<span class="t" style="font-size:26.4px;color:#2a2f37;transform:translate(570.80px,196.52px) scale(0.2473,.25);">Sam Gupta/Hans Bengel Draft Portal</span>
<span class="t" style="font-size:25.2px;color:#8ea2b8;transform:translate(230.00px,211.02px) scale(0.2153,.25);">SAP HANA - ERP</span>
<span class="t" style="font-size:28.0px;color:#20252d;-webkit-text-stroke:0.35px #20252d;transform:translate(230.00px,219.27px) scale(0.2299,.25);">Due Diligence Bug Fixes</span>
<span class="t" style="font-size:28.0px;color:#20252d;-webkit-text-stroke:0.35px #20252d;transform:translate(339.30px,219.27px) scale(0.2382,.25);">New Application - Build &amp; Coding</span>
<span class="t" style="font-size:28.8px;color:#20252d;-webkit-text-stroke:0.6px #20252d;transform:translate(531.60px,217.27px) scale(0.2355,.25);">1.00</span>
<span class="t" style="font-size:26.4px;color:#2a2f37;transform:translate(570.80px,217.52px) scale(0.2408,.25);">SAP HANA ERP Due Diligence Coding Session</span>
<span class="t" style="font-size:25.2px;color:#8ea2b8;transform:translate(230.00px,232.02px) scale(0.2172,.25);">Referee Engagement</span>
<span class="t" style="font-size:28.0px;color:#20252d;-webkit-text-stroke:0.35px #20252d;transform:translate(230.00px,240.27px) scale(0.2226,.25);">REPS MVP 3.0</span>
<span class="t" style="font-size:28.0px;color:#20252d;-webkit-text-stroke:0.35px #20252d;transform:translate(339.30px,240.27px) scale(0.2343,.25);">Existing App - Enhancements &amp; New Functionality</span>
<span class="t" style="font-size:28.8px;color:#20252d;-webkit-text-stroke:0.6px #20252d;transform:translate(531.60px,238.27px) scale(0.2355,.25);">1.50</span>
<span class="t" style="font-size:26.4px;color:#2a2f37;transform:translate(570.80px,238.52px) scale(0.2396,.25);">Referee Engagement REPS MVP 3.0 Developm...</span>
<span class="t" style="font-size:25.2px;color:#8ea2b8;transform:translate(230.00px,253.02px) scale(0.2226,.25);">Fan Data Platform</span>
<span class="t" style="font-size:28.0px;color:#20252d;-webkit-text-stroke:0.35px #20252d;transform:translate(230.00px,261.27px) scale(0.2311,.25);">Fan Data Platform</span>
<span class="t" style="font-size:28.0px;color:#20252d;-webkit-text-stroke:0.35px #20252d;transform:translate(339.30px,261.27px) scale(0.2343,.25);">Existing App - Enhancements &amp; New Functionality</span>
<span class="t" style="font-size:28.8px;color:#20252d;-webkit-text-stroke:0.6px #20252d;transform:translate(531.60px,259.27px) scale(0.2355,.25);">0.50</span>
<span class="t" style="font-size:26.4px;color:#2a2f37;transform:translate(570.80px,259.52px) scale(0.2461,.25);">Fan Data Platform Enhancement Workshop</span>
<span class="t" style="font-size:26.4px;color:#2d333c;transform:translate(216.20px,282.52px) scale(0.2494,.25);">Add Time Entry</span>
<span class="t" style="font-size:28.0px;color:#1c2430;font-weight:700;transform:translate(198.40px,313.27px) scale(0.2273,.25);">Time Off</span>
<span class="t" style="font-size:28.0px;color:#20252d;-webkit-text-stroke:0.35px #20252d;transform:translate(198.40px,339.27px) scale(0.2414,.25);">Vacation</span>
<span class="t" style="font-size:28.8px;color:#20252d;-webkit-text-stroke:0.6px #20252d;transform:translate(532.00px,338.27px) scale(0.2355,.25);">2.00</span>
<span class="t" style="font-size:26.4px;color:#2d333c;transform:translate(216.20px,365.52px) scale(0.2562,.25);">Add Time Off Entry</span>
<span class="t" style="font-size:40.0px;color:#3a3f47;font-weight:700;transform:translate(693.00px,382.77px) scale(0.2376,.25);">8.00</span>
<span class="t" style="font-size:24.8px;color:#9aa8b8;transform:translate(714.00px,386.27px) scale(0.2660,.25);">hours</span>
</div>
</div></div>
</body></html>
